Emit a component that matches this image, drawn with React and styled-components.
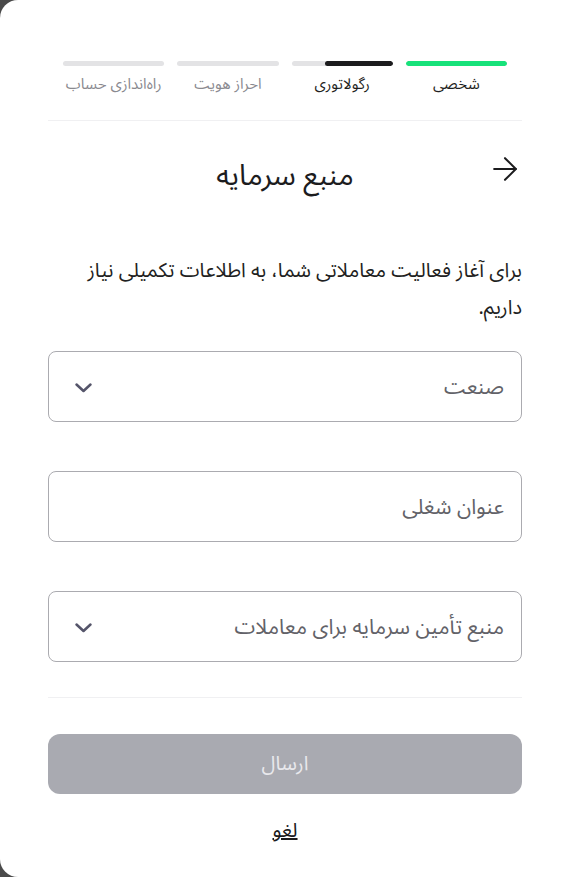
import React from 'react';
import styled, { createGlobalStyle } from 'styled-components';

const GlobalStyle = createGlobalStyle`
  html, body {
    margin: 0;
    padding: 0;
    background: #4a4a4a;
  }
  * {
    box-sizing: border-box;
  }
`;

const Panel = styled.div`
  direction: rtl;
  min-height: 877px;
  background: #ffffff;
  border-radius: 18px 0 0 18px;
  padding: 61px 45px 0 48px;
  font-family: "Noto Sans Arabic", "DejaVu Sans", sans-serif;
  color: #1c1c1e;
`;

const Steps = styled.div`
  display: grid;
  grid-template-columns: repeat(4, 1fr);
  gap: 13px;
  margin: 0 15px;
`;

const Step = styled.div`
  display: flex;
  flex-direction: column;
  align-items: center;
`;

const Track = styled.div`
  width: 100%;
  height: 5px;
  border-radius: 3px;
  background: #e3e3e5;
  overflow: hidden;
`;

const Fill = styled.div`
  height: 100%;
  border-radius: 3px;
  background: ${(p) => p.$color};
`;

const StepLabel = styled.span`
  margin-top: 7px;
  font-size: 15px;
  line-height: 22px;
  color: ${(p) => (p.$active ? '#1f1f22' : '#8a8a90')};
`;

const Divider = styled.hr`
  border: none;
  height: 1px;
  background: #f0f0f2;
  margin: ${(p) => p.$margin};
`;

const Header = styled.div`
  display: grid;
  grid-template-columns: 1fr auto 1fr;
  align-items: center;
  height: 50px;
  margin-top: 30px;
`;

const BackButton = styled.button`
  justify-self: start;
  margin-right: 4px;
  margin-bottom: 14px;
  background: none;
  border: none;
  padding: 0;
  display: flex;
  cursor: pointer;
  color: #1c1c1e;
`;

const Title = styled.h1`
  margin: 0;
  font-size: 29px;
  font-weight: 400;
  line-height: 50px;
`;

const Intro = styled.p`
  margin: 52px 0 24px;
  font-size: 20px;
  line-height: 37px;
  color: #1f1f22;
`;

const Fields = styled.div`
  display: flex;
  flex-direction: column;
  gap: 49px;
`;

const Field = styled.div`
  height: 71px;
  border: 1.5px solid #ababb0;
  border-radius: 8px;
  padding: 0 17px 0 25px;
  display: flex;
  align-items: center;
  justify-content: space-between;
  cursor: pointer;
`;

const Placeholder = styled.span`
  font-size: 21px;
  color: #626268;
`;

const Chevron = styled.svg`
  color: #55556a;
  margin-top: 2px;
`;

const SubmitButton = styled.button`
  display: block;
  width: 100%;
  height: 60px;
  border: none;
  border-radius: 12px;
  background: #a9aab1;
  color: #e8e8ec;
  font-family: inherit;
  font-size: 20px;
  margin-top: 36px;
  cursor: not-allowed;
`;

const CancelLink = styled.a`
  display: block;
  width: fit-content;
  margin: 25px auto 0;
  font-size: 20px;
  line-height: 24px;
  color: #1c1c1e;
  text-decoration: underline;
  cursor: pointer;
`;

const steps = [
  { label: 'شخصی', fill: 100, color: '#17e27a', active: true },
  { label: 'رگولاتوری', fill: 67, color: '#1c1c1e', active: true },
  { label: 'احراز هویت', fill: 0 },
  { label: 'راه‌اندازی حساب', fill: 0 },
];

const fields = [
  { label: 'صنعت', select: true },
  { label: 'عنوان شغلی', select: false },
  { label: 'منبع تأمین سرمایه برای معاملات', select: true },
];

const ChevronDown = () => (
  <Chevron width="19" height="12" viewBox="0 0 19 12" fill="none" stroke="currentColor" strokeWidth="2.5" strokeLinecap="round" strokeLinejoin="round">
    <polyline points="2.5 2.5 9.5 9 16.5 2.5" />
  </Chevron>
);

const App = () => {
  return (
    <>
      <GlobalStyle />
      <Panel>
        <Steps>
          {steps.map((s) => (
            <Step key={s.label}>
              <Track>
                {s.fill > 0 && <Fill $color={s.color} style={{ width: `${s.fill}%` }} />}
              </Track>
              <StepLabel $active={s.active}>{s.label}</StepLabel>
            </Step>
          ))}
        </Steps>

        <Divider $margin="25px 0 0" />

        <Header>
          <BackButton aria-label="بازگشت">
            <svg width="26" height="26" viewBox="0 0 24 24" fill="none" stroke="currentColor" strokeWidth="1.9" strokeLinecap="round" strokeLinejoin="round">
              <line x1="2" y1="12" x2="22" y2="12" />
              <polyline points="12 2 22 12 12 22" />
            </svg>
          </BackButton>
          <Title>منبع سرمایه</Title>
        </Header>

        <Intro>برای آغاز فعالیت معاملاتی شما، به اطلاعات تکمیلی نیاز داریم.</Intro>

        <Fields>
          {fields.map((f) => (
            <Field key={f.label}>
              <Placeholder>{f.label}</Placeholder>
              {f.select && <ChevronDown />}
            </Field>
          ))}
        </Fields>

        <Divider $margin="35px 0 0" />

        <SubmitButton disabled>ارسال</SubmitButton>
        <CancelLink>لغو</CancelLink>
      </Panel>
    </>
  );
};

export default App;
